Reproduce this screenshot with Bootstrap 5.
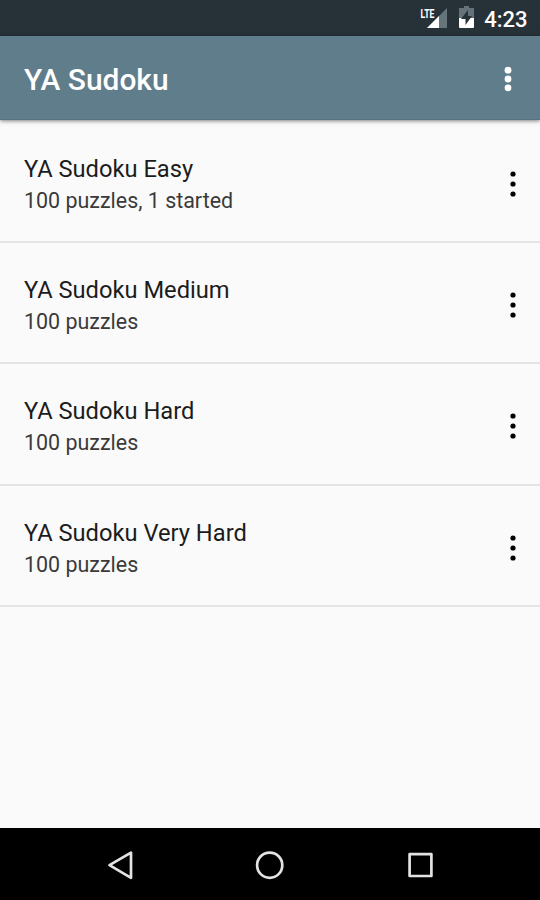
<!DOCTYPE html>
<html lang="en">
<head>
<meta charset="utf-8">
<meta name="viewport" content="width=device-width, initial-scale=1">
<title>YA Sudoku</title>
<link href="https://cdn.jsdelivr.net/npm/bootstrap@5.3.0/dist/css/bootstrap.min.css" rel="stylesheet">
<style>
  body { font-family: Roboto, "Liberation Sans", sans-serif; background: #fafafa; color: #1c1c1c; height: 900px; overflow: hidden; }
  svg { display: block; }
  .status-bar { height: 36px; background: #263238; padding-right: 12.5px; }
  .clock { font-size: 22px; font-weight: 500; line-height: 36px; padding-top: 3px; margin-left: 9px; }
  .app-bar { height: 84px; background: #607d8b; padding: 0 23px 0 24px; border-bottom: 1px solid #58727f; box-shadow: 0 1px 4px rgba(0,0,0,.5); z-index: 1; }
  .app-title { font-size: 29.9px; font-weight: 500; line-height: 36px; padding-top: 5px; }
  .menu-btn { line-height: 0; }
  .app-bar .menu-btn { padding-top: 2px !important; }
  .puzzle-list { padding-top: 1.5px; }
  .puzzle-row { height: 121.4px; padding: 4px 23.5px 0 24px; border-bottom: 2px solid #e5e5e5; }
  .puzzle-text { padding-top: 2px; }
  .puzzle-row .menu-btn { padding-top: 1px !important; }
  .puzzle-name { font-size: 23.7px; line-height: 32px; }
  .puzzle-count { font-size: 21.45px; line-height: 31px; color: #3a3a3a; }
  .nav-keys { height: 72px; background: #000; }
</style>
<script src="https://cdn.jsdelivr.net/npm/bootstrap@5.3.0/dist/js/bootstrap.bundle.min.js"></script>
</head>
<body class="d-flex flex-column">
<svg class="d-none">
  <symbol id="dots" viewBox="0 0 8 28"><circle cx="4" cy="4" r="2.6"/><circle cx="4" cy="14" r="2.6"/><circle cx="4" cy="24" r="2.6"/></symbol>
</svg>
<div class="status-bar d-flex justify-content-end align-items-center text-white flex-shrink-0">
  <svg width="56" height="36" viewBox="0 0 56 36" aria-label="LTE signal and battery">
    <path d="M28 8v20H8z" fill="#66747b"/>
    <path d="M0 7h16v12H8V20H0z" fill="#263238"/>
    <path d="M20 16v12H8z" fill="#fff"/>
    <text x="1.5" y="18" font-size="13.5" font-weight="700" fill="#fff" textLength="14" lengthAdjust="spacingAndGlyphs">LTE</text>
    <path d="M45 6h5v2h5v10H40V8h5z" fill="#65727a"/>
    <path d="M40 18h15v9q0 1-1 1H41q-1 0-1-1z" fill="#fff"/>
    <path d="M49 10v6h4l-6.5 9v-6H42z" fill="#263238"/>
  </svg>
  <span class="clock">4:23</span>
</div>
<header class="app-bar d-flex justify-content-between align-items-center text-white position-relative flex-shrink-0">
  <h1 class="app-title mb-0">YA Sudoku</h1>
  <button class="menu-btn btn p-0 border-0 text-white" aria-label="More options">
    <svg width="18" height="28" viewBox="0 0 18 28" fill="currentColor"><circle cx="9" cy="5.2" r="3.4"/><circle cx="9" cy="14" r="3.4"/><circle cx="9" cy="22.8" r="3.4"/></svg>
  </button>
</header>
<main class="puzzle-list flex-grow-1">
  <div class="puzzle-row d-flex justify-content-between align-items-center">
    <div class="puzzle-text"><div class="puzzle-name">YA Sudoku Easy</div><div class="puzzle-count">100 puzzles, 1 started</div></div>
    <button class="menu-btn btn p-0 border-0 text-black" aria-label="Options"><svg width="8" height="28" fill="currentColor"><use href="#dots"/></svg></button>
  </div>
  <div class="puzzle-row d-flex justify-content-between align-items-center">
    <div class="puzzle-text"><div class="puzzle-name">YA Sudoku Medium</div><div class="puzzle-count">100 puzzles</div></div>
    <button class="menu-btn btn p-0 border-0 text-black" aria-label="Options"><svg width="8" height="28" fill="currentColor"><use href="#dots"/></svg></button>
  </div>
  <div class="puzzle-row d-flex justify-content-between align-items-center">
    <div class="puzzle-text"><div class="puzzle-name">YA Sudoku Hard</div><div class="puzzle-count">100 puzzles</div></div>
    <button class="menu-btn btn p-0 border-0 text-black" aria-label="Options"><svg width="8" height="28" fill="currentColor"><use href="#dots"/></svg></button>
  </div>
  <div class="puzzle-row d-flex justify-content-between align-items-center">
    <div class="puzzle-text"><div class="puzzle-name">YA Sudoku Very Hard</div><div class="puzzle-count">100 puzzles</div></div>
    <button class="menu-btn btn p-0 border-0 text-black" aria-label="Options"><svg width="8" height="28" fill="currentColor"><use href="#dots"/></svg></button>
  </div>
</main>
<nav class="nav-keys flex-shrink-0" aria-label="System navigation">
  <svg width="540" height="72" viewBox="0 0 540 72" fill="none" stroke="#e3e3e3" stroke-width="2.7" stroke-linejoin="round">
    <path d="M109.5 37.2L131 24.6v25.2z"/>
    <circle cx="269.7" cy="37.2" r="12.6"/>
    <path d="M409.6 26.2h21.8v21.8h-21.8z"/>
  </svg>
</nav>
</body>
</html>
